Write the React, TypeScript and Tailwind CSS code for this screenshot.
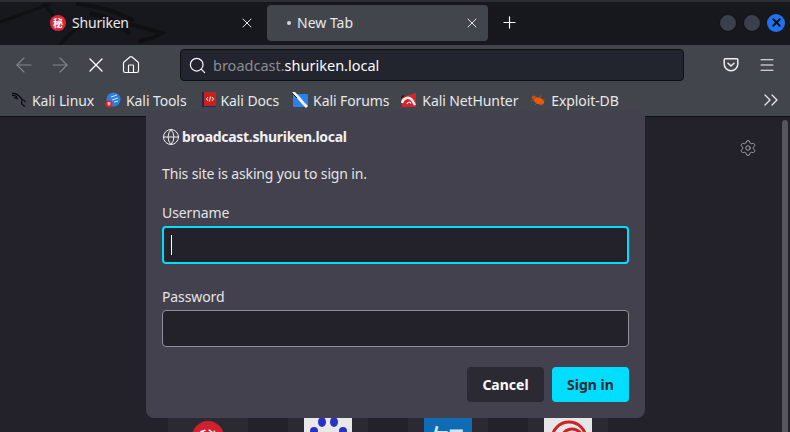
import { X, Plus, ArrowLeft, ArrowRight, Home, Search, Menu, ChevronsRight, Settings, Globe } from 'lucide-react';

const bookmarks = [
  { name: 'Kali Linux', gap: 'mr-[11px]', icon: <KaliIcon /> },
  { name: 'Kali Tools', gap: 'mr-[15px]', icon: <ToolsIcon /> },
  { name: 'Kali Docs', gap: 'mr-[13px]', icon: <DocsIcon /> },
  { name: 'Kali Forums', gap: 'mr-[12px]', icon: <ForumsIcon /> },
  { name: 'Kali NetHunter', gap: 'mr-[12px]', icon: <NetHunterIcon /> },
  { name: 'Exploit-DB', gap: '', icon: <ExploitIcon /> },
];

function KaliIcon() {
  return (
    <svg width="16" height="16" viewBox="0 0 16 16" fill="none" stroke="#08080a" strokeWidth="1.2">
      <path d="M1 1.500c3-.5 5 .5 6.500 2 1.500 1.500 3 2 3.500 4 .3 1.500-.7 2.500-.3 4 .3 1 1.300 1.500 3.300 3" />
      <path d="M1 3.500c2-.3 3.500 0 5 1.500M3 6c1.500-.3 3 0 4 1M11 7.500c1.500 0 2.500 1 3.500 2.500" />
    </svg>
  );
}

function ToolsIcon() {
  return (
    <svg width="16" height="16" viewBox="0 0 16 16">
      <circle cx="8.500" cy="7.500" r="7" fill="#2f7fe0" />
      <path d="M6 5l6-2M7 8l6-2M9 10l4-1" stroke="#cfe4fb" strokeWidth="1" fill="none" />
      <circle cx="4" cy="12" r="3.500" fill="#d9232e" />
      <path d="M2.500 10.800h3M3.300 11v2.400M4.800 11v2.400" stroke="#fff" strokeWidth=".8" />
    </svg>
  );
}

function DocsIcon() {
  return (
    <svg width="14" height="16" viewBox="0 0 14 16">
      <rect x="0" y="0" width="14" height="15" fill="#1d2a52" />
      <rect x="2" y="0" width="12" height="14" fill="#c8201f" />
      <path d="M6 5L4.500 7 6 9M10 5l1.500 2L10 9M8.600 4.500L7.400 9.500" stroke="#fff" strokeWidth=".9" fill="none" />
    </svg>
  );
}

function ForumsIcon() {
  return (
    <svg width="16" height="16" viewBox="0 0 16 16">
      <rect x="1" y="2" width="15" height="13" rx="1" fill="#2d7ff0" />
      <path d="M1 0l5 5 5 6 4 4" stroke="#f1f3f5" strokeWidth="2.800" fill="none" />
      <path d="M0 1l5 5" stroke="#15171b" strokeWidth="1" />
    </svg>
  );
}

function NetHunterIcon() {
  return (
    <svg width="16" height="16" viewBox="0 0 16 16">
      <path d="M1 5l14-4v14H1z" fill="#d8232f" />
      <path d="M1 11c1-5 7-7 10-3l3 5" stroke="#f2f2f2" strokeWidth="2.400" fill="none" />
      <path d="M6 12c.5-2 3-2.500 4-.5" stroke="#f2f2f2" strokeWidth="1.200" fill="none" />
      <path d="M0 6l3-2.500" stroke="#15171b" strokeWidth="1.400" />
    </svg>
  );
}

function ExploitIcon() {
  return (
    <svg width="16" height="16" viewBox="0 0 16 16">
      <ellipse cx="9" cy="9" rx="5.500" ry="3.400" fill="#e8590c" transform="rotate(25 9 9)" />
      <circle cx="3.800" cy="5.600" r="2" fill="#c9500f" />
      <path d="M1 9l3-1M5 13l2-2M11 3l-1 3M15 8l-2 0" stroke="#a8521e" strokeWidth=".8" />
    </svg>
  );
}

function PocketIcon() {
  return (
    <svg width="16" height="16" viewBox="0 0 16 16" fill="none" stroke="#f0f0f2" strokeWidth="1.500" strokeLinecap="round" strokeLinejoin="round">
      <path d="M2.200 1.800h11.600c.6 0 1 .4 1 1V7a6.800 6.800 0 0 1-13.600 0V2.800c0-.6.4-1 1-1z" />
      <path d="M5 6.200l3 2.800 3-2.800" />
    </svg>
  );
}

function Tile({ bg, children }: { bg: string; children: React.ReactNode }) {
  return (
    <div className="w-20 h-20 bg-[#2b2a33] rounded flex justify-center pt-4">
      <div className={`w-12 h-12 overflow-hidden flex justify-center ${bg}`}>{children}</div>
    </div>
  );
}

export default function App() {
  return (
    <div className="relative w-[790px] h-[432px] overflow-hidden flex flex-col bg-[#23222b] font-['Noto_Sans',sans-serif] text-[#fbfbfe]">
      {/* tab strip */}
      <div className="relative h-[45px] shrink-0 bg-[#17181d] border-t-2 border-[#2c2e35] flex items-center pl-[39px] pr-[5px] pb-[2px]">
        <svg className="absolute left-0 top-0" width="170" height="43" viewBox="0 0 170 43" fill="none" stroke="#0f1013" strokeLinecap="round">
          <path d="M0 20L50 2" strokeWidth="3" />
          <path d="M44 2l14 18" strokeWidth="3" />
          <path d="M78 2c20 2 40 8 54 16" strokeWidth="4" />
          <path d="M92 12c14 2 26 8 36 18" strokeWidth="5" />
          <path d="M128 22l20 5 14 4-10 5-12 3" strokeWidth="4" />
          <path d="M60 43c6-8 12-14 20-18" strokeWidth="3" />
        </svg>
        <div className="relative w-[228px] flex items-center">
          <div className="ml-[11px] w-4 h-4 rounded-full bg-[#dc2638] flex items-center justify-center text-[10px] font-bold leading-none font-['Noto_Sans_CJK_SC',sans-serif]">秘</div>
          <span className="ml-[6px] text-[14px] tracking-[-0.2px] text-[#e8e8ea]">Shuriken</span>
          <X className="ml-auto mr-[12px]" size={16} strokeWidth={1.5} color="#e8e8ea" />
        </div>
        <div className="relative w-[221px] h-9 rounded bg-[#42454c] flex items-center pl-[20px] pr-[8px] text-[14px]">
          <div className="w-[4px] h-[4px] rounded-full bg-[#d5d6d9] mr-[6px]" />
          <span className="text-[#e8e8ea]">New Tab</span>
          <X className="ml-auto" size={16} strokeWidth={1.5} color="#e8e8ea" />
        </div>
        <Plus className="ml-[12px]" size={19} strokeWidth={1.5} />
        <div className="ml-auto flex items-center gap-[6px]">
          <div className="w-[18px] h-[18px] rounded-full bg-[#3b404d] border border-[#0f1013]" />
          <div className="w-[18px] h-[18px] rounded-full bg-[#3b404d] border border-[#0f1013]" />
          <div className="w-[18px] h-[18px] rounded-full bg-[#2072ee] flex items-center justify-center">
            <X size={13} strokeWidth={3.500} color="#0b0d12" />
          </div>
        </div>
      </div>

      {/* toolbar */}
      <div className="h-[40px] shrink-0 bg-[#42454c] flex items-center pl-[12px]">
        <ArrowLeft size={24} strokeWidth={1.100} color="#84868c" />
        <ArrowRight className="ml-[12px]" size={24} strokeWidth={1.100} color="#84868c" />
        <X className="ml-[12px]" size={24} strokeWidth={1.400} />
        <Home className="ml-[13px]" size={20} strokeWidth={1.400} />
        <div className="ml-[39px] w-[504px] h-8 rounded bg-[#23252e] border border-[#0f1013] flex items-center pl-[7px]">
          <Search size={19} strokeWidth={1.500} />
          <span className="ml-[6px] text-[14.500px] leading-none text-[#8b8c93]">
            broadcast.<span className="text-[#fbfbfe]">shuriken.local</span>
          </span>
        </div>
        <div className="ml-[39px]"><PocketIcon /></div>
        <Menu className="ml-[19px]" size={18} strokeWidth={1.400} />
      </div>

      {/* bookmarks */}
      <div className="h-[32px] shrink-0 bg-[#42454c] border-b border-[#0f1013] flex items-center pl-[11px] pr-[7px] text-[14px] tracking-[-0.1px] text-[#e8e8ea] pb-[1px]">
        <div className="flex items-center">
          {bookmarks.map((b) => (
            <div key={b.name} className={`flex items-center gap-[5px] whitespace-nowrap ${b.gap}`}>
              {b.icon}
              <span>{b.name}</span>
            </div>
          ))}
        </div>
        <ChevronsRight className="ml-auto" size={24} strokeWidth={1.300} />
      </div>

      {/* new tab page */}
      <div className="relative flex-1 pl-[168px] pt-[284px]">
        <div className="flex gap-10">
          <Tile bg="bg-transparent">
            <div className="w-8 h-8 mt-[4px] rounded-full bg-[#d3202f] text-center text-[18px] leading-8 font-['Noto_Sans_CJK_SC',sans-serif]">秘</div>
          </Tile>
          <Tile bg="bg-[#e8e8e8]">
            <svg width="48" height="48" viewBox="0 0 48 48" fill="#2932c4">
              <ellipse cx="18" cy="5" rx="4" ry="5" />
              <ellipse cx="30" cy="5" rx="4" ry="5" />
              <ellipse cx="10" cy="14" rx="4" ry="4" />
              <ellipse cx="39" cy="14" rx="4" ry="4" />
              <ellipse cx="24" cy="24" rx="10" ry="9" />
            </svg>
          </Tile>
          <Tile bg="bg-[#0f6cb4]">
            <span className="text-[36px] leading-[48px] text-[#cfe3f3] font-['Noto_Sans_CJK_SC',sans-serif]">知</span>
          </Tile>
          <Tile bg="bg-[#e6e6e6]">
            <svg width="48" height="48" viewBox="0 0 48 48" fill="none" stroke="#cc2127" strokeWidth="3">
              <circle cx="25" cy="22" r="17" />
              <circle cx="28" cy="23" r="11" />
            </svg>
          </Tile>
        </div>
        <Settings className="absolute left-[739px] top-[22px]" size={18} strokeWidth={1.300} color="#a5a5ab" />
        <div className="absolute right-[2px] top-[3px] h-[400px] w-[6px] rounded-full bg-[#55555c]" />
      </div>

      {/* sign-in prompt */}
      <div className="absolute left-[146px] top-[111px] w-[499px] h-[307px] bg-[#42414d] rounded-b-lg pt-[17px] pl-[16px] pr-[16px]">
        <div className="flex items-center gap-[2px] text-[14px] font-bold tracking-[-0.3px] text-[#f0f0f2] leading-[16px]">
          <Globe size={18} strokeWidth={1.300} />
          broadcast.shuriken.local
        </div>
        <p className="mt-[18px] text-[14px] tracking-[-0.15px] leading-[20px] text-[#e4e4e8]">This site is asking you to sign in.</p>
        <label className="block mt-[19px] text-[14px] tracking-[-0.1px] leading-[20px] text-[#e4e4e8]">Username</label>
        <div className="mt-[3px] h-[38px] rounded bg-[#23222b] border-2 border-[#00ddff] flex items-center pl-[7px]">
          <div className="w-px h-[20px] bg-white" />
        </div>
        <label className="block mt-[23px] text-[14px] tracking-[-0.1px] leading-[20px] text-[#e4e4e8]">Password</label>
        <div className="mt-[3px] h-[37px] rounded bg-[#23222b] border border-[#8f8f9d]" />
        <div className="mt-[20px] flex justify-end gap-[8px] text-[14px] font-bold">
          <button className="w-[77px] h-[35px] rounded bg-[#2b2a33] text-[#fbfbfe]">Cancel</button>
          <button className="w-[77px] h-[35px] rounded bg-[#00ddff] text-[#2b2a33]">Sign in</button>
        </div>
      </div>
    </div>
  );
}
